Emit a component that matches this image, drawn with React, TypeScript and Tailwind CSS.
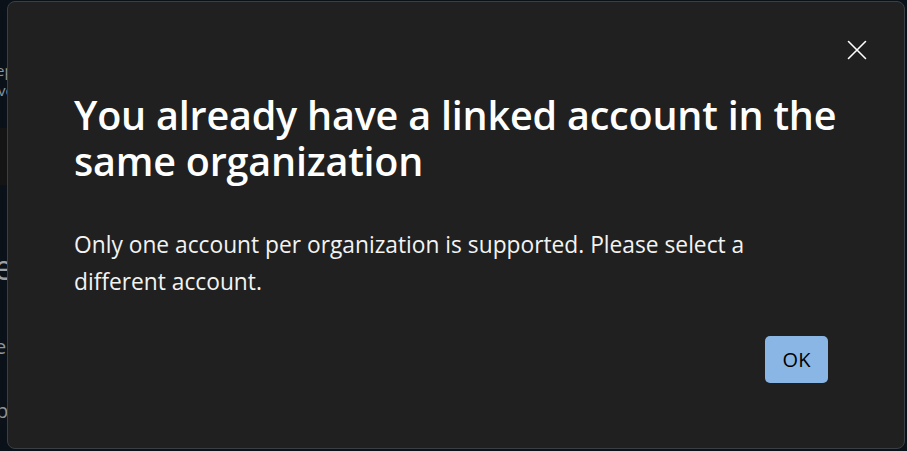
import React from "react";

export default function App() {
  return (
    <div className="relative w-[907px] h-[451px] overflow-hidden bg-[#0a1118]" style={{ fontFamily: '"Open Sans", "Noto Sans", sans-serif' }}>
      {/* background page fragments */}
      <div className="flex flex-col w-[7px] overflow-hidden text-[#8d949a]">
        <div className="h-[58px]" />
        <div className="text-[15px] leading-[25px] whitespace-nowrap -ml-[4px]">ep</div>
        <div className="text-[15px] leading-[14px] whitespace-nowrap -ml-[2px]">vo</div>
        <div className="h-[31px]" />
        <div className="h-[57px] bg-[#141414]" />
        <div className="h-[62px]" />
        <div className="text-[34px] leading-[40px] whitespace-nowrap -ml-[6px] text-[#9aa0a5]">e</div>
        <div className="h-[46px]" />
        <div className="text-[20px] leading-[28px] whitespace-nowrap -ml-[5px]">e</div>
        <div className="h-[36px]" />
        <div className="text-[20px] leading-[28px] whitespace-nowrap -ml-[4px]">p</div>
      </div>

      {/* dialog overlay */}
      <div className="absolute left-[7px] top-[1px] w-[898px] h-[448px] rounded-[8px] border border-[#3a3f45] bg-[#202020] text-white">
        <button className="absolute right-[37px] top-[38px] w-[20px] h-[20px] flex items-center justify-center text-white">
          <svg width="20" height="20" viewBox="0 0 20 20" fill="none" stroke="currentColor" strokeWidth="1.6" strokeLinecap="round">
            <path d="M1.5 1.5 L18.5 18.5 M18.5 1.5 L1.5 18.5" />
          </svg>
        </button>
        <div className="flex flex-col pl-[66px] pr-[64px] pt-[90px]">
          <h1 className="text-[39.5px] leading-[46px] font-semibold tracking-[-0.2px]">
            You already have a linked account in the same organization
          </h1>
          <p className="mt-[42px] pr-[20px] text-[22.75px] leading-[37px] text-[#f3f3f3]">
            Only one account per organization is supported. Please select a different account.
          </p>
          <div className="flex justify-end mt-[36px] pr-[12px]">
            <button className="w-[63px] h-[47px] rounded-[5px] bg-[#89b6e4] text-black text-[20px] flex items-center justify-center">
              OK
            </button>
          </div>
        </div>
      </div>
    </div>
  );
}
